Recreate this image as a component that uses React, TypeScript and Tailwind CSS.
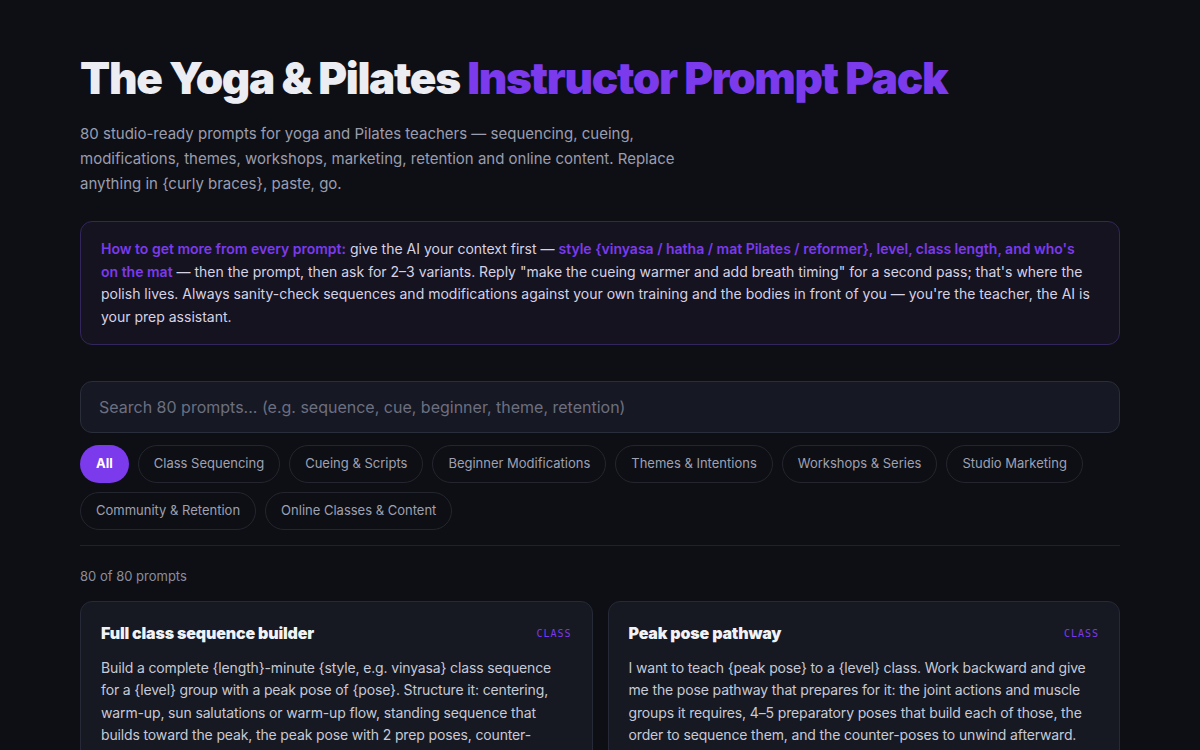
import { useState } from 'react'

type Prompt = {
  title: string
  tag: string
  body: string
}

const categories = [
  'All',
  'Class Sequencing',
  'Cueing & Scripts',
  'Beginner Modifications',
  'Themes & Intentions',
  'Workshops & Series',
  'Studio Marketing',
  'Community & Retention',
  'Online Classes & Content',
]

const prompts: Prompt[] = [
  {
    title: 'Full class sequence builder',
    tag: 'CLASS',
    body: 'Build a complete {length}-minute {style, e.g. vinyasa} class sequence for a {level} group with a peak pose of {pose}. Structure it: centering, warm-up, sun salutations or warm-up flow, standing sequence that builds toward the peak, the peak pose with 2 prep poses, counter-poses, cool-down and savasana, with timing for each block.',
  },
  {
    title: 'Peak pose pathway',
    tag: 'CLASS',
    body: 'I want to teach {peak pose} to a {level} class. Work backward and give me the pose pathway that prepares for it: the joint actions and muscle groups it requires, 4–5 preparatory poses that build each of those, the order to sequence them, and the counter-poses to unwind afterward.',
  },
]

export default function App() {
  const [active, setActive] = useState('All')
  const [query, setQuery] = useState('')

  return (
    <div className="min-h-screen bg-[#0e0f14] font-['Inter',sans-serif] text-[#e6e7ee]">
      <div className="mx-auto max-w-[1040px] pt-[52px] pb-16">
        <h1 className="text-[44px] leading-[52px] font-black tracking-[-0.03em] text-[#ecedf2]">
          The Yoga &amp; Pilates <span className="text-[#7c3aed]">Instructor Prompt Pack</span>
        </h1>

        <p className="mt-[17px] max-w-[610px] text-[15px] leading-[25px] text-[#9a9db0]">
          80 studio-ready prompts for yoga and Pilates teachers — sequencing, cueing, modifications, themes, workshops,
          marketing, retention and online content. Replace anything in {'{curly braces}'}, paste, go.
        </p>

        {/* usage tip */}
        <div className="mt-[25px] rounded-xl border border-[#33265c] bg-[#15131f] px-5 py-4 text-[14px] leading-[22.5px] text-[#d6d2e6]">
          <span className="font-semibold text-[#7c3aed]">How to get more from every prompt:</span> give the AI your
          context first —{' '}
          <span className="font-semibold text-[#7c3aed]">
            style {'{vinyasa / hatha / mat Pilates / reformer}'}, level, class length, and who's on{'\u00a0'}the{'\u00a0'}mat
          </span>{' '}
          — then the prompt, then ask for 2–3 variants. Reply "make the cueing warmer and add breath timing" for a
          second pass; that's where the polish lives. Always sanity-check sequences and modifications against your own
          training and the bodies in front of you — you're the teacher, the AI is your prep assistant.
        </div>

        <input
          value={query}
          onChange={(e) => setQuery(e.target.value)}
          placeholder="Search 80 prompts... (e.g. sequence, cue, beginner, theme, retention)"
          className="mt-9 block h-[52px] w-full rounded-xl border border-[#2a2d3a] bg-[#161823] px-[18px] text-[16px] text-[#e6e7ee] placeholder:text-[#6c6f80] outline-none"
        />

        <div className="mt-3 flex flex-wrap gap-x-[9px] gap-y-[9px]">
          {categories.map((c) =>
            c === active ? (
              <button
                key={c}
                onClick={() => setActive(c)}
                className="h-[38px] rounded-full bg-[#7c3aed] px-4 text-[13px] font-bold text-white"
              >
                {c}
              </button>
            ) : (
              <button
                key={c}
                onClick={() => setActive(c)}
                className="h-[38px] rounded-full border border-[#24262f] px-[15px] text-[13px] text-[#9ea1b3]"
              >
                {c}
              </button>
            )
          )}
        </div>

        <div className="mt-[15px] border-t border-[#1f212b]" />

        <div className="mt-[21px] text-[13px] text-[#8a8d9e]">80 of 80 prompts</div>

        <div className="mt-[14px] grid grid-cols-2 gap-[15px]">
          {prompts.map((p) => (
            <article key={p.title} className="rounded-xl border border-[#262937] bg-[#161822] px-5 pt-[19px] pb-5">
              <div className="flex items-start justify-between gap-3">
                <h3 className="text-[16px] leading-[24px] font-black tracking-[-0.01em] text-[#f1f2f6]">{p.title}</h3>
                <span className="mt-[7px] font-['DejaVu_Sans_Mono',monospace] text-[10px] leading-[12px] tracking-[0.1em] text-[#7c3aed]">
                  {p.tag}
                </span>
              </div>
              <p className="mt-3 text-[14px] leading-[22.5px] tracking-[-0.01em] text-[#c7cad6]">{p.body}</p>
            </article>
          ))}
        </div>
      </div>
    </div>
  )
}
